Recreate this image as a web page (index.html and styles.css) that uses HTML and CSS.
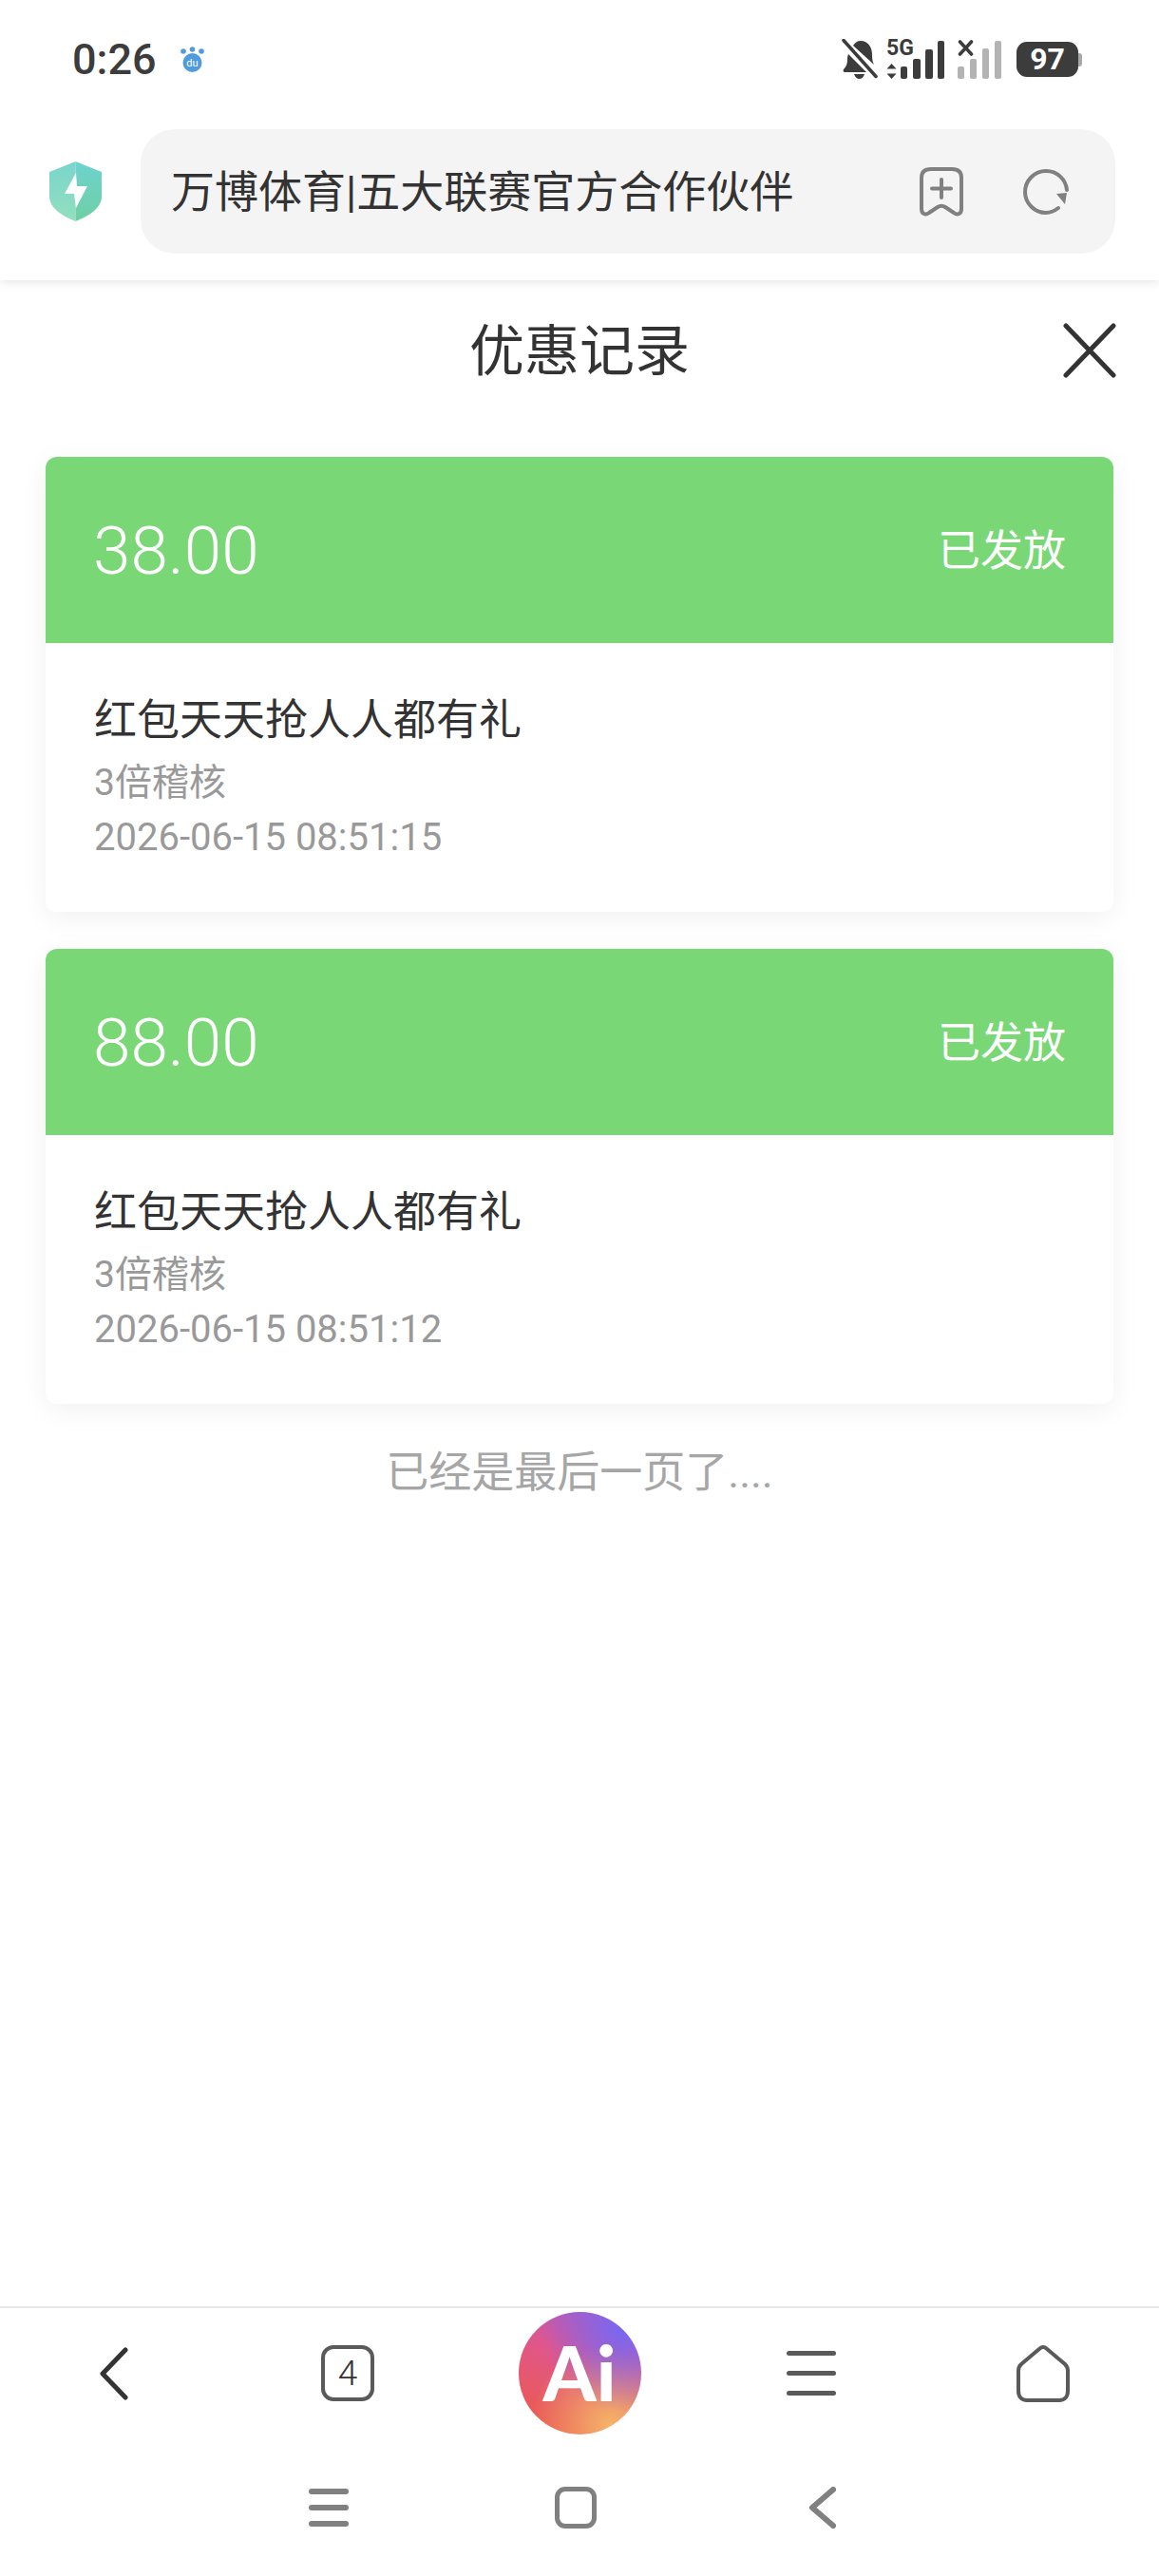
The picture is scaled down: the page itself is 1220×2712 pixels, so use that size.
FILE: index.html
```html
<!DOCTYPE html>
<html lang="zh-CN">
<head>
    <meta charset="UTF-8">
    <meta name="viewport" content="width=device-width, initial-scale=1.0">
    <title>优惠记录</title>
    <link rel="stylesheet" href="styles.css">
</head>
<body>
    <div class="page">
        <header class="top">
            <div class="status-bar">
                <span class="time">0:26</span>
                <svg class="baidu" viewBox="0 0 25 27">
                    <circle cx="3" cy="5" r="2.8" fill="#4f9bdc"/>
                    <circle cx="12.5" cy="3" r="2.8" fill="#4f9bdc"/>
                    <circle cx="22" cy="5" r="2.8" fill="#4f9bdc"/>
                    <circle cx="12.5" cy="17" r="10" fill="#4f9bdc"/>
                    <text x="12.5" y="21" text-anchor="middle" class="baidu-text">du</text>
                </svg>
                <div class="status-icons">
                    <svg class="bell" viewBox="0 0 38 42">
                        <path d="M2 32c3-3 4-6 4-11 0-2 .3-3.500 1-5l19 19H3c-1 0-2-1-1-3zM12 7c2-3 4-5 8-5 8 0 12 7 12 15 0 4 .5 7 2 10z" fill="#3c3c3c"/>
                        <path d="M13 37h11c-1 3-3 5-5.500 5S14 40 13 37z" fill="#3c3c3c"/>
                        <path d="M2 2l34 38" stroke="#fff" stroke-width="7" fill="none"/>
                        <path d="M2 1.500l34 38" stroke="#3c3c3c" stroke-width="3.500" stroke-linecap="round" fill="none"/>
                    </svg>
                    <svg class="signal-main" viewBox="0 0 61 41">
                        <text x="0" y="16" class="net-text">5G</text>
                        <path d="M5.500 25l5 5.500H.5zM5.500 41l-5-5.500h10z" fill="#3c3c3c"/>
                        <rect x="15" y="28" width="7" height="13" rx="2" fill="#3c3c3c"/>
                        <rect x="28" y="20" width="8" height="21" rx="2" fill="#3c3c3c"/>
                        <rect x="41" y="10" width="8" height="31" rx="2" fill="#3c3c3c"/>
                        <rect x="54" y="1" width="7" height="40" rx="2" fill="#3c3c3c"/>
                    </svg>
                    <svg class="signal-off" viewBox="0 0 46 41">
                        <path d="M2.500 2l12 13M14.500 2l-12 13" stroke="#3c3c3c" stroke-width="3.600" stroke-linecap="round" fill="none"/>
                        <rect x="0" y="28" width="7" height="13" rx="2" fill="#b3b3b3"/>
                        <rect x="13" y="20" width="7" height="21" rx="2" fill="#b3b3b3"/>
                        <rect x="26" y="9" width="7" height="32" rx="2" fill="#b3b3b3"/>
                        <rect x="39" y="1" width="7" height="40" rx="2" fill="#b3b3b3"/>
                    </svg>
                    <div class="battery"><span class="battery-num">97</span></div>
                </div>
            </div>
            <div class="toolbar">
                <svg class="shield" viewBox="0 0 55 63">
                    <defs>
                        <linearGradient id="shieldL" x1="0" y1="0" x2="0" y2="1">
                            <stop offset="0" stop-color="#79d5cc"/>
                            <stop offset="1" stop-color="#93dfbe"/>
                        </linearGradient>
                        <linearGradient id="shieldR" x1="0" y1="0" x2="0" y2="1">
                            <stop offset="0" stop-color="#6dd3cf"/>
                            <stop offset="1" stop-color="#6ecfa4"/>
                        </linearGradient>
                    </defs>
                    <path d="M27.500 0L0 11v26c0 11 12 20 27.500 26z" fill="url(#shieldL)"/>
                    <path d="M27.500 0L55 11v26c0 11-12 20-27.500 26z" fill="url(#shieldR)"/>
                    <path d="M28 12L16 34h10l2 15 12-23H29z" fill="#fff"/>
                </svg>
                <div class="address-bar">
                    <span class="address-text">万博体育|五大联赛官方合作伙伴</span>
                    <svg class="bookmark" viewBox="0 0 46 52">
                        <path d="M12 2h22c7 0 10 3 10 9v33c0 5-4 7-8 4l-9-6c-3-2-5-2-8 0l-9 6c-4 3-8 1-8-4V11C2 5 5 2 12 2z" fill="none" stroke="#808080" stroke-width="4"/>
                        <path d="M23 13v19M13 22.500h20" stroke="#808080" stroke-width="4" stroke-linecap="round" fill="none"/>
                    </svg>
                    <svg class="reload" viewBox="0 0 48 48">
                        <path d="M37 41c-4 3-8 5-13 5C12 46 2 36 2 24S12 2 24 2s21 9 22 20" fill="none" stroke="#808080" stroke-width="4" stroke-linecap="round"/>
                        <path d="M35 26l11-1-2 12z" fill="#808080"/>
                    </svg>
                </div>
            </div>
        </header>

        <main class="content">
            <div class="title-row">
                <h1 class="title">优惠记录</h1>
                <svg class="close" viewBox="0 0 56 58">
                    <path d="M3 3l50 52M53 3L3 55" stroke="#333" stroke-width="5" stroke-linecap="round" fill="none"/>
                </svg>
            </div>
            <div class="record-list">
                <div class="record">
                    <div class="record-head">
                        <span class="amount">38.00</span>
                        <span class="state">已发放</span>
                    </div>
                    <div class="record-body">
                        <div class="record-name">红包天天抢人人都有礼</div>
                        <div class="record-meta">3倍稽核</div>
                        <div class="record-time">2026-06-15 08:51:15</div>
                    </div>
                </div>
                <div class="record">
                    <div class="record-head">
                        <span class="amount">88.00</span>
                        <span class="state">已发放</span>
                    </div>
                    <div class="record-body">
                        <div class="record-name">红包天天抢人人都有礼</div>
                        <div class="record-meta">3倍稽核</div>
                        <div class="record-time">2026-06-15 08:51:12</div>
                    </div>
                </div>
            </div>
            <p class="list-end">已经是最后一页了....</p>
        </main>

        <div class="browser-tools">
            <svg class="tool-back" viewBox="0 0 32 56">
                <path d="M28 3L4 28l24 25" fill="none" stroke="#333" stroke-width="5" stroke-linecap="round" stroke-linejoin="round"/>
            </svg>
            <div class="tabs-count">4</div>
            <div class="ai-button">Ai</div>
            <div class="tool-menu"><span></span><span></span><span></span></div>
            <svg class="tool-home" viewBox="0 0 56 60">
                <path d="M28 2c-1.500 0-2.500.6-3.500 1.500L5 20c-2 2-3 3.500-3 6.500V48c0 6 3 10 9 10h34c6 0 9-4 9-10V26.500c0-3-1-4.500-3-6.500L31.500 3.500C30.500 2.600 29.500 2 28 2z" fill="none" stroke="#5a5a5a" stroke-width="4"/>
            </svg>
        </div>

        <nav class="system-nav">
            <div class="nav-menu"><span></span><span></span><span></span></div>
            <div class="nav-square"></div>
            <svg class="nav-back" viewBox="0 0 28 44">
                <path d="M25 3L3 22l22 19" fill="none" stroke="#808080" stroke-width="6" stroke-linecap="round" stroke-linejoin="round"/>
            </svg>
        </nav>
    </div>
</body>
</html>
```

FILE: styles.css
```css
* {
    box-sizing: border-box;
}

body {
    margin: 0;
    background-color: #fff;
    color: #333;
    font-family: Roboto, "Noto Sans CJK SC", sans-serif;
}

.page {
    display: flex;
    flex-direction: column;
    width: 1220px;
    height: 2712px;
    overflow: hidden;
}

/* status bar + address bar */
.top {
    position: relative;
    z-index: 1;
    background-color: #fff;
    box-shadow: 0 2px 10px rgba(0, 0, 0, 0.1);
}

.status-bar {
    display: flex;
    align-items: center;
    height: 124px;
    padding: 0 81px 0 76px;
}

.time {
    font-size: 45px;
    font-weight: 500;
    color: #3c3c3c;
}

.baidu {
    width: 25px;
    height: 27px;
    margin-left: 25px;
}

.baidu-text {
    font-size: 11px;
    fill: #fff;
}

.status-icons {
    display: flex;
    align-items: center;
    margin-left: auto;
}

.bell {
    width: 38px;
    height: 42px;
    margin-right: 9px;
}

.signal-main {
    width: 61px;
    height: 41px;
    margin-right: 14px;
    overflow: visible;
}

.net-text {
    font-size: 23px;
    font-weight: 700;
    fill: #3c3c3c;
}

.signal-off {
    width: 46px;
    height: 41px;
    margin-right: 16px;
}

.battery {
    position: relative;
    display: flex;
    align-items: center;
    justify-content: center;
    width: 65px;
    height: 37px;
    margin-right: 4px;
    border-radius: 11px;
    background-color: #3c3c3c;
}

.battery::after {
    content: "";
    position: absolute;
    right: -4px;
    top: 12px;
    width: 4px;
    height: 14px;
    border-radius: 0 3px 3px 0;
    background-color: #a8a8a8;
}

.battery-num {
    font-size: 32px;
    font-weight: 700;
    color: #fff;
}

.toolbar {
    display: flex;
    align-items: center;
    height: 171px;
    padding: 12px 46px 28px 52px;
}

.shield {
    flex: none;
    width: 55px;
    height: 63px;
    margin-right: 41px;
}

.address-bar {
    display: flex;
    align-items: center;
    flex: 1;
    height: 131px;
    padding: 0 49px 0 32px;
    border-radius: 36px;
    background-color: #f4f4f4;
}

.address-text {
    margin-bottom: 8px;
    font-size: 46px;
    color: #333;
}

.bookmark {
    width: 46px;
    height: 52px;
    margin-left: auto;
}

.reload {
    width: 48px;
    height: 48px;
    margin-left: 63px;
}

/* records */
.content {
    flex: 1;
    padding: 0 48px;
}

.title-row {
    display: grid;
    grid-template-columns: 1fr auto 1fr;
    align-items: center;
    height: 148px;
}

.title {
    grid-column: 2;
    margin: 0 0 9px;
    font-size: 58px;
    font-weight: 400;
    color: #333;
}

.close {
    grid-column: 3;
    justify-self: end;
    width: 56px;
    height: 58px;
    margin-right: -3px;
}

.record-list {
    display: flex;
    flex-direction: column;
    gap: 39px;
    margin-top: 38px;
}

.record {
    border-radius: 12px;
    overflow: hidden;
    background-color: #fff;
    box-shadow: 0 6px 30px rgba(0, 0, 0, 0.06);
}

.record-head {
    display: flex;
    align-items: center;
    justify-content: space-between;
    height: 196px;
    padding: 0 50px;
    background-color: #79d775;
    color: #fff;
}

.amount {
    font-size: 71px;
    font-weight: 300;
}

.state {
    margin-bottom: 5px;
    font-size: 45px;
}

.record-body {
    padding: 52px 51px 49px;
}

.record-name {
    margin-bottom: 6px;
    font-size: 45px;
    line-height: 60px;
    color: #333;
}

.record-meta {
    font-size: 39px;
    line-height: 58px;
    color: #999;
}

.record-time {
    font-size: 40px;
    line-height: 58px;
    color: #999;
}

.list-end {
    margin: 43px 0 0;
    font-size: 45px;
    line-height: 60px;
    text-align: center;
    color: #a6a6a6;
}

/* browser bottom bar */
.browser-tools {
    display: grid;
    grid-template-columns: repeat(5, 244px);
    align-items: center;
    justify-items: center;
    height: 139px;
    border-top: 2px solid #e8e8e8;
}

.tool-back {
    width: 32px;
    height: 56px;
    margin-right: 5px;
}

.tabs-count {
    display: flex;
    align-items: center;
    justify-content: center;
    width: 56px;
    height: 59px;
    border: 4px solid #5a5a5a;
    border-radius: 13px;
    font-size: 37px;
    font-weight: 300;
    color: #333;
}

.ai-button {
    display: flex;
    align-items: center;
    justify-content: center;
    width: 129px;
    height: 129px;
    padding-bottom: 4px;
    border-radius: 50%;
    background:
        radial-gradient(circle at 85% 15%, #7a67f0 0, rgba(122, 103, 240, 0) 55%),
        radial-gradient(circle at 75% 92%, #f5b468 0, rgba(245, 180, 104, 0) 55%),
        linear-gradient(200deg, #a05fd0, #e0568c 40%, #ea5a55 85%);
    font-family: Lato, sans-serif;
    font-size: 80px;
    font-weight: 900;
    color: #fff;
}

.tool-menu {
    display: flex;
    flex-direction: column;
    gap: 16px;
    width: 52px;
}

.tool-menu span {
    height: 5px;
    border-radius: 3px;
    background-color: #5a5a5a;
}

.tool-home {
    width: 56px;
    height: 60px;
}

/* phone navigation */
.system-nav {
    display: grid;
    grid-template-columns: repeat(3, 260px);
    justify-content: center;
    justify-items: center;
    align-items: center;
    height: 145px;
    padding: 0 8px 0 0;
}

.nav-menu {
    display: flex;
    flex-direction: column;
    gap: 11px;
    width: 42px;
}

.nav-menu span {
    height: 6px;
    border-radius: 3px;
    background-color: #808080;
}

.nav-square {
    width: 44px;
    height: 44px;
    border: 5px solid #808080;
    border-radius: 11px;
}

.nav-back {
    width: 28px;
    height: 44px;
}
```
